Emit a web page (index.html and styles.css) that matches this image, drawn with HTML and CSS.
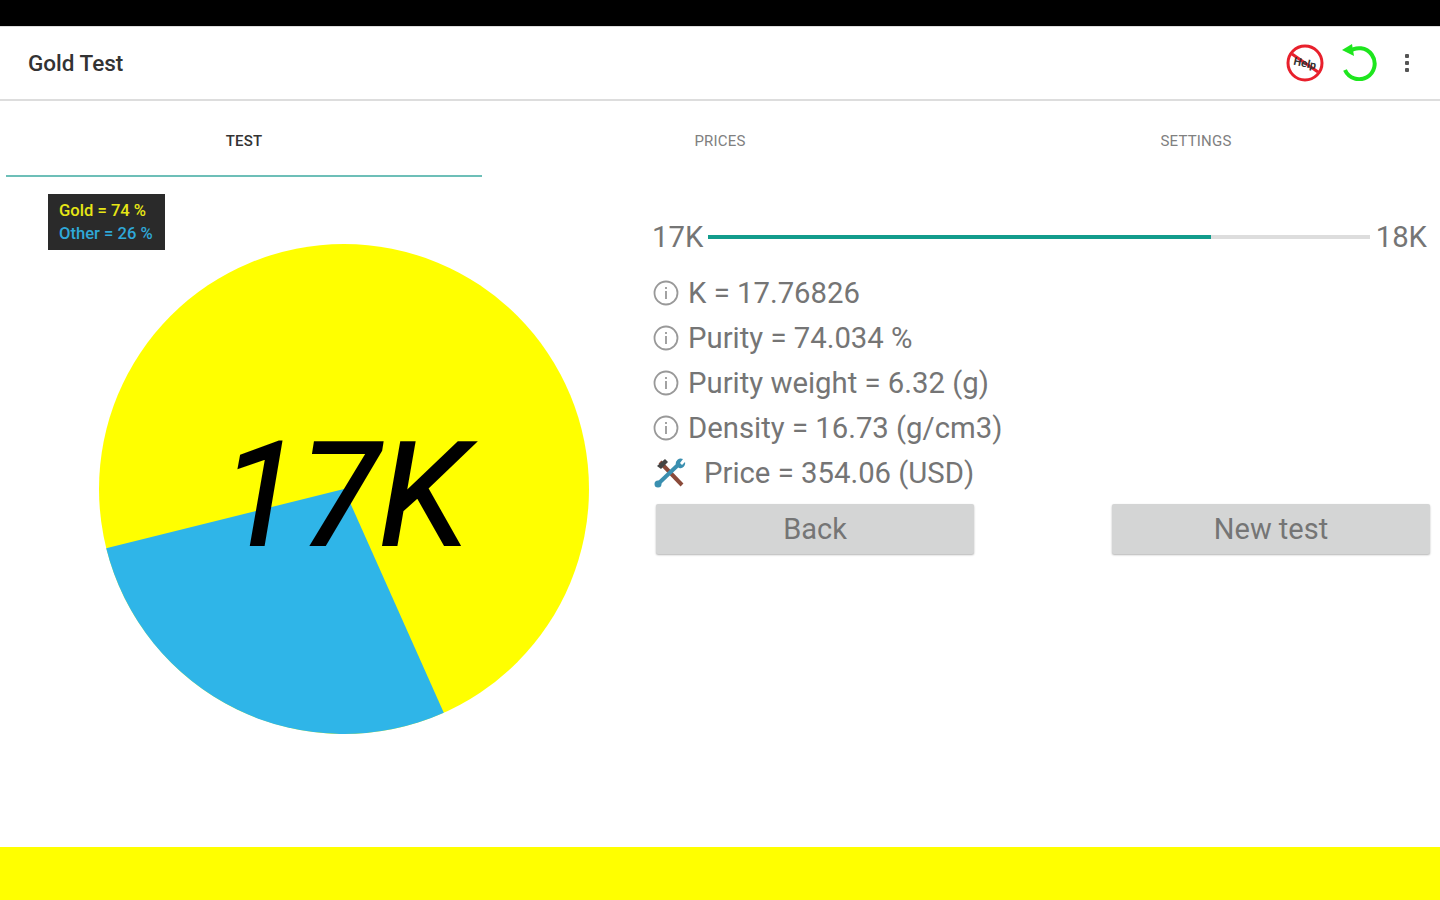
FILE: index.html
```html
<!DOCTYPE html>
<html lang="en">
<head>
  <meta charset="UTF-8">
  <title>Gold Test</title>
  <link rel="stylesheet" href="styles.css">
</head>
<body>
  <div class="status-bar"></div>

  <header class="toolbar">
    <div class="app-title">Gold Test</div>
    <div class="toolbar-actions">
      <svg class="help-icon" width="38" height="38" viewBox="0 0 38 38">
        <circle cx="19" cy="19" r="17" fill="#fff" stroke="#e8202c" stroke-width="3"/>
        <line x1="6" y1="10" x2="32" y2="28" stroke="#e8202c" stroke-width="3"/>
        <text x="19" y="23" text-anchor="middle" class="help-text" transform="rotate(12 19 19)">Help</text>
      </svg>
      <svg class="refresh-icon" width="38" height="38" viewBox="0 0 38 38">
        <path d="M9 9 A15.5 15.5 0 1 1 5 27" fill="none" stroke="#1ee61e" stroke-width="4"/>
        <path d="M2 7 L12 1 L14 13 Z" fill="#1ee61e"/>
      </svg>
      <div class="overflow-menu">
        <span></span><span></span><span></span>
      </div>
    </div>
  </header>

  <nav class="tabs">
    <div class="tab tab-active">TEST</div>
    <div class="tab">PRICES</div>
    <div class="tab">SETTINGS</div>
  </nav>

  <main class="content">
    <section class="chart-pane">
      <div class="legend">
        <div class="legend-gold">Gold = 74 %</div>
        <div class="legend-other">Other = 26 %</div>
      </div>
      <svg class="pie" width="640" height="670" viewBox="0 0 640 670">
        <circle cx="344" cy="312" r="245" fill="#ffff00"/>
        <path d="M344 312 L106.2 371.2 A245 245 0 0 0 443.8 535.8 Z" fill="#2fb5e8"/>
        <text x="344" y="368" text-anchor="middle" class="pie-label">17K</text>
      </svg>
    </section>

    <section class="details">
      <div class="range">
        <span>17K</span>
        <div class="range-track"><div class="range-fill" style="width: 76%"></div></div>
        <span>18K</span>
      </div>

      <div class="stat">
        <svg class="info-icon" width="26" height="26" viewBox="0 0 26 26"><circle cx="13" cy="13" r="11.5"/><path d="M13 7v2M13 11v8"/></svg>
        <span>K = 17.76826</span>
      </div>
      <div class="stat">
        <svg class="info-icon" width="26" height="26" viewBox="0 0 26 26"><circle cx="13" cy="13" r="11.5"/><path d="M13 7v2M13 11v8"/></svg>
        <span>Purity = 74.034 %</span>
      </div>
      <div class="stat">
        <svg class="info-icon" width="26" height="26" viewBox="0 0 26 26"><circle cx="13" cy="13" r="11.5"/><path d="M13 7v2M13 11v8"/></svg>
        <span>Purity weight = 6.32 (g)</span>
      </div>
      <div class="stat">
        <svg class="info-icon" width="26" height="26" viewBox="0 0 26 26"><circle cx="13" cy="13" r="11.5"/><path d="M13 7v2M13 11v8"/></svg>
        <span>Density = 16.73 (g/cm3)</span>
      </div>
      <div class="stat stat-price">
        <svg class="tools-icon" width="32" height="30" viewBox="0 0 32 30">
          <path d="M6 4 L28 27" stroke="#8a4a3a" stroke-width="4"/>
          <path d="M3 8 L11 1 L14 4 L7 11 Z" fill="#444"/>
          <path d="M25 6 L5 25" stroke="#3a8fb0" stroke-width="4"/>
          <path d="M22 7 A5 5 0 0 1 29 1 L26 5 L28 7 L31 4 A5 5 0 0 1 25 10 Z" fill="#3a8fb0"/>
          <circle cx="4" cy="26" r="3.5" fill="#3a8fb0"/>
        </svg>
        <span>Price = 354.06 (USD)</span>
      </div>

      <div class="buttons">
        <button class="btn">Back</button>
        <button class="btn">New test</button>
      </div>
    </section>
  </main>

  <div class="bottom-bar"></div>
</body>
</html>
```

FILE: styles.css
```css
body {
  margin: 0;
  height: 900px;
  overflow: hidden;
  display: flex;
  flex-direction: column;
  font-family: Roboto, "Liberation Sans", sans-serif;
  background-color: #fff;
}
.status-bar {
  height: 26px;
  background-color: #000;
}
.toolbar {
  height: 72px;
  display: flex;
  align-items: center;
  justify-content: space-between;
  padding-left: 28px;
  border-top: 1px solid #ddd;
  border-bottom: 2px solid #ddd;
}
.app-title {
  font-size: 22.5px;
  font-weight: 500;
  color: #333;
}
.toolbar-actions {
  display: flex;
  align-items: center;
  margin-right: 31px;
}
.help-icon {
  margin-top: -1px;
}
.help-text {
  font-family: Roboto, sans-serif;
  font-size: 11px;
  font-weight: 700;
  fill: #333;
}
.refresh-icon {
  margin-top: -2px;
  margin-left: 16px;
}
.overflow-menu {
  display: flex;
  flex-direction: column;
  gap: 3px;
  margin-left: 27px;
}
.overflow-menu span {
  width: 4px;
  height: 4px;
  background-color: #555;
  border-radius: 1px;
}
.tabs {
  height: 76px;
  display: flex;
  padding: 0 6px;
}
.tab {
  flex: 1;
  display: flex;
  align-items: center;
  justify-content: center;
  padding-top: 6px;
  box-sizing: border-box;
  border-bottom: 2px solid transparent;
  font-size: 15px;
  letter-spacing: 0.2px;
  color: #808080;
}
.tab-active {
  color: #333;
  font-weight: 500;
  border-bottom-color: #6dbfb8;
}
.content {
  flex: 1;
  display: flex;
}
.chart-pane {
  width: 640px;
  position: relative;
}
.pie {
  display: block;
}
.pie-label {
  font-family: Roboto, sans-serif;
  font-size: 145px;
  font-style: italic;
  fill: #000;
  stroke: #000;
  stroke-width: 2px;
}
.legend {
  position: absolute;
  left: 48px;
  top: 17px;
  width: 117px;
  height: 56px;
  box-sizing: border-box;
  padding: 5px 0 0 11px;
  background-color: #2a2a2a;
  font-size: 16.6px;
  font-weight: 500;
  line-height: 23px;
}
.legend-gold {
  color: #e6e615;
}
.legend-other {
  color: #2fa8d8;
}
.details {
  flex: 1;
  padding: 42px 10px 0 12px;
  font-size: 29.3px;
  color: #757575;
}
.range {
  display: flex;
  align-items: center;
  height: 36px;
  margin-right: 3px;
  margin-bottom: 15px;
}
.range-track {
  flex: 1;
  height: 4px;
  margin: 0 6px 0 5px;
  background-color: #ddd;
}
.range-fill {
  height: 100%;
  background-color: #129c8c;
}
.stat {
  display: flex;
  align-items: center;
  height: 45px;
  gap: 9px;
  padding-left: 1px;
}
.info-icon {
  fill: none;
  stroke: #999;
  stroke-width: 1.8;
}
.stat-price {
  gap: 18px;
  padding-left: 2px;
}
.buttons {
  display: flex;
  justify-content: space-between;
  margin: 9px 0 0 4px;
}
.btn {
  width: 318px;
  height: 50px;
  border: none;
  border-radius: 2px;
  background-color: #d4d5d5;
  box-shadow: 0 1px 2px rgba(0, 0, 0, 0.3);
  color: #757575;
  font-family: inherit;
  font-size: 29px;
}
.bottom-bar {
  height: 53px;
  background-color: #ffff00;
}
```
